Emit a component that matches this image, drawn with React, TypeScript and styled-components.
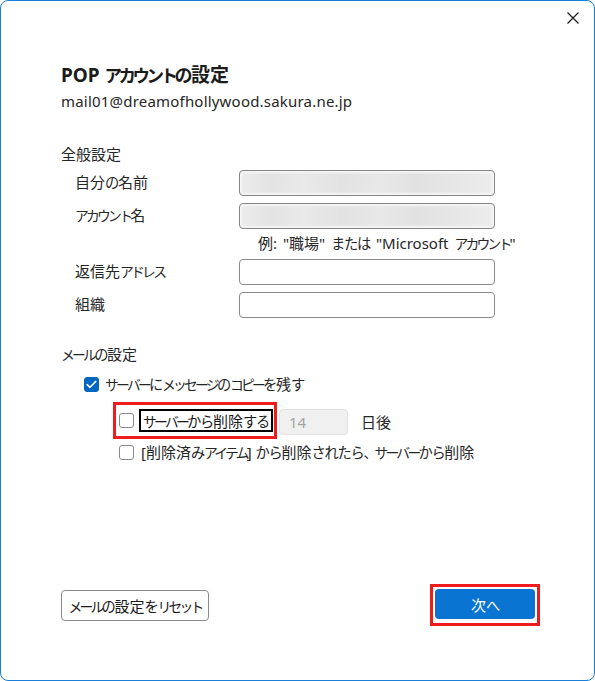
import React from "react";
import styled, { createGlobalStyle } from "styled-components";

const GlobalStyle = createGlobalStyle`
  html, body { margin: 0; padding: 0; background: #ffffff; }
  body {
    font-family: "Noto Sans CJK JP", "Noto Sans", sans-serif;
    color: #1f1f1f;
    font-size: 15px;
  }
  button { font-family: inherit; }
  * { box-sizing: border-box; }
`;

/* Yu Gothic UI draws kana narrower and a little smaller than kanji */
const Kata = styled.span`
  font-size: 0.92em;
  letter-spacing: -0.2em;
`;
const Hira = styled.span`
  font-size: 0.95em;
  letter-spacing: -0.09em;
`;
const Latin = styled.span`
  font-family: "Noto Sans", sans-serif;
`;

function jp(text: string): React.ReactNode[] {
  const out: React.ReactNode[] = [];
  const re = /([\u30A0-\u30FF\u3001\u3002]+)|([\u3040-\u309F]+)|([\x20-\x7E]+)|([^\u30A0-\u30FF\u3001\u3002\u3040-\u309F\x20-\x7E]+)/g;
  let m: RegExpExecArray | null;
  let i = 0;
  while ((m = re.exec(text)) !== null) {
    if (m[1]) out.push(<Kata key={i++}>{m[1]}</Kata>);
    else if (m[2]) out.push(<Hira key={i++}>{m[2]}</Hira>);
    else if (m[3]) out.push(<Latin key={i++}>{m[3]}</Latin>);
    else out.push(<React.Fragment key={i++}>{m[4]}</React.Fragment>);
  }
  return out;
}

const Dialog = styled.div`
  width: 595px;
  height: 681px;
  border: 1px solid #1a7fd6;
  border-radius: 8px;
  background: #ffffff;
  display: flex;
  flex-direction: column;
  overflow: hidden;
`;

const TopBar = styled.div`
  display: flex;
  justify-content: flex-end;
  height: 36px;
  padding: 11px 15px 0 0;
`;

const CloseButton = styled.button`
  width: 12px;
  height: 12px;
  padding: 0;
  border: none;
  background: transparent;
  display: flex;
  cursor: pointer;
`;

const Body = styled.div`
  display: flex;
  flex-direction: column;
  padding-left: 60px;
`;

const Title = styled.h1`
  margin: 23px 0 0;
  font-size: 19px;
  line-height: 28px;
  font-weight: 700;
  color: #1b1b1b;
  white-space: nowrap;
`;

const Email = styled.div`
  margin-top: 2px;
  font-family: "Noto Sans", sans-serif;
  font-size: 15px;
  letter-spacing: 0.2px;
  line-height: 20px;
  color: #262626;
`;

const SectionTitle = styled.div<{ $top: number }>`
  margin-top: ${(p) => p.$top}px;
  font-size: 15px;
  line-height: 20px;
  color: #262626;
`;

const FieldGrid = styled.div`
  margin: 6px 0 0 14px;
  display: grid;
  grid-template-columns: 164px 256px;
  grid-template-rows: 26px 26px 16px 26px 26px;
  row-gap: 7px;
  align-items: center;
`;

const Label = styled.div`
  font-size: 15px;
  line-height: 20px;
  color: #262626;
  margin-top: -3px;
  white-space: nowrap;
`;

const TextBox = styled.div<{ $blurred?: boolean }>`
  height: 26px;
  border: 1px solid ${(p) => (p.$blurred ? "#858585" : "#8a8a8a")};
  border-radius: 4px;
  background: ${(p) =>
    p.$blurred
      ? "linear-gradient(90deg, #ececec 0%, #e3e3e3 12%, #e9e9e9 25%, #e2e2e2 40%, #e8e8e8 55%, #e1e1e1 70%, #e7e7e7 85%, #ececec 100%)"
      : "#ffffff"};
  box-shadow: ${(p) => (p.$blurred ? "inset 0 0 2px 2px #f6f6f6" : "none")};
`;

const Hint = styled.div`
  grid-column: 2;
  padding-left: 19px;
  white-space: nowrap;
  font-size: 15px;
  line-height: 16px;
  word-spacing: 2px;
  color: #262626;
  margin-top: -2px;
`;

const CheckRow = styled.div<{ $top: number; $indent: number; $gap: number }>`
  display: flex;
  align-items: center;
  margin-top: ${(p) => p.$top}px;
  margin-left: ${(p) => p.$indent}px;
  gap: ${(p) => p.$gap}px;
  font-size: 15px;
  line-height: 20px;
  color: #262626;
  white-space: nowrap;
`;

const Box = styled.span<{ $checked?: boolean }>`
  width: 15px;
  height: 15px;
  flex: none;
  border-radius: 3px;
  display: flex;
  align-items: center;
  justify-content: center;
  background: ${(p) => (p.$checked ? "#0067c0" : "#ffffff")};
  border: 1px solid ${(p) => (p.$checked ? "#0067c0" : "#8a8a8a")};
`;

const RedFrame = styled.div<{ $padding: string }>`
  display: flex;
  align-items: center;
  border: 3px solid #ee1c1c;
  padding: ${(p) => p.$padding};
`;

const DeleteRow = styled.div`
  display: flex;
  align-items: center;
  margin-top: 8px;
  margin-left: 52px;
  font-size: 15px;
  line-height: 20px;
  color: #262626;
  white-space: nowrap;
`;

const DeleteFrame = styled(RedFrame)`
  height: 37px;
  gap: 5px;
`;

const BlackLabel = styled.span`
  border: 2px solid #000000;
  height: 23px;
  padding: 0 2px 0 2px;
  display: flex;
  align-items: center;
  color: #1a1a1a;
`;

const NumberBox = styled.div`
  margin-left: 2px;
  width: 69px;
  height: 26px;
  border: 1px solid #e2e2e2;
  border-radius: 4px;
  background: #f0f0f0;
  color: #a3a3a3;
  padding-left: 9px;
  display: flex;
  align-items: center;
  margin-top: 3px;
  font-family: "Noto Sans", sans-serif;
`;

const DaysLabel = styled.span`
  margin-left: 13px;
  margin-top: 3px;
`;

const Footer = styled.div`
  margin-top: auto;
  display: flex;
  justify-content: space-between;
  align-items: center;
  padding: 0 54px 54px 60px;
`;

const ResetButton = styled.button`
  width: 148px;
  height: 31px;
  border: 1px solid #8a8a8a;
  border-radius: 4px;
  background: #ffffff;
  font-size: 15px;
  color: #1a1a1a;
  padding: 0;
  white-space: nowrap;
`;

const PrimaryButton = styled.button`
  width: 100px;
  height: 30px;
  border: none;
  border-radius: 4px;
  background: #0a74d3;
  color: #ffffff;
  font-size: 15px;
  padding: 0;
`;

const Check = () => (
  <svg width="11" height="9" viewBox="0 0 11 9">
    <path d="M1.2 4.6 L4 7.3 L9.8 1.4" fill="none" stroke="#ffffff" strokeWidth="1.6" strokeLinecap="round" strokeLinejoin="round" />
  </svg>
);

export default function App() {
  return (
    <>
      <GlobalStyle />
      <Dialog>
        <TopBar>
          <CloseButton aria-label="閉じる">
            <svg width="12" height="12" viewBox="0 0 12 12">
              <path d="M0.5 0.5 L11.5 11.5 M11.5 0.5 L0.5 11.5" stroke="#1a1a1a" strokeWidth="1.2" />
            </svg>
          </CloseButton>
        </TopBar>
        <Body>
          <Title>{jp("POP アカウントの設定")}</Title>
          <Email>mail01@dreamofhollywood.sakura.ne.jp</Email>

          <SectionTitle $top={33}>{jp("全般設定")}</SectionTitle>
          <FieldGrid>
            <Label>{jp("自分の名前")}</Label>
            <TextBox $blurred />
            <Label>{jp("アカウント名")}</Label>
            <TextBox $blurred />
            <Hint>{jp('例: "職場" または "Microsoft アカウント"')}</Hint>
            <Label>{jp("返信先アドレス")}</Label>
            <TextBox />
            <Label>{jp("組織")}</Label>
            <TextBox />
          </FieldGrid>

          <SectionTitle $top={26}>{jp("メールの設定")}</SectionTitle>
          <CheckRow $top={10} $indent={23} $gap={6}>
            <Box $checked>
              <Check />
            </Box>
            <span>{jp("サーバーにメッセージのコピーを残す")}</span>
          </CheckRow>

          <DeleteRow>
            <DeleteFrame $padding="0 1px 0 3px">
              <Box />
              <BlackLabel>{jp("サーバーから削除する")}</BlackLabel>
            </DeleteFrame>
            <NumberBox>14</NumberBox>
            <DaysLabel>{jp("日後")}</DaysLabel>
          </DeleteRow>

          <CheckRow $top={3} $indent={58} $gap={7}>
            <Box />
            <span>{jp("[削除済みアイテム] から削除されたら、サーバーから削除")}</span>
          </CheckRow>
        </Body>
        <Footer>
          <ResetButton>{jp("メールの設定をリセット")}</ResetButton>
          <RedFrame $padding="2px 2px 4px 2px">
            <PrimaryButton>{jp("次へ")}</PrimaryButton>
          </RedFrame>
        </Footer>
      </Dialog>
    </>
  );
}
